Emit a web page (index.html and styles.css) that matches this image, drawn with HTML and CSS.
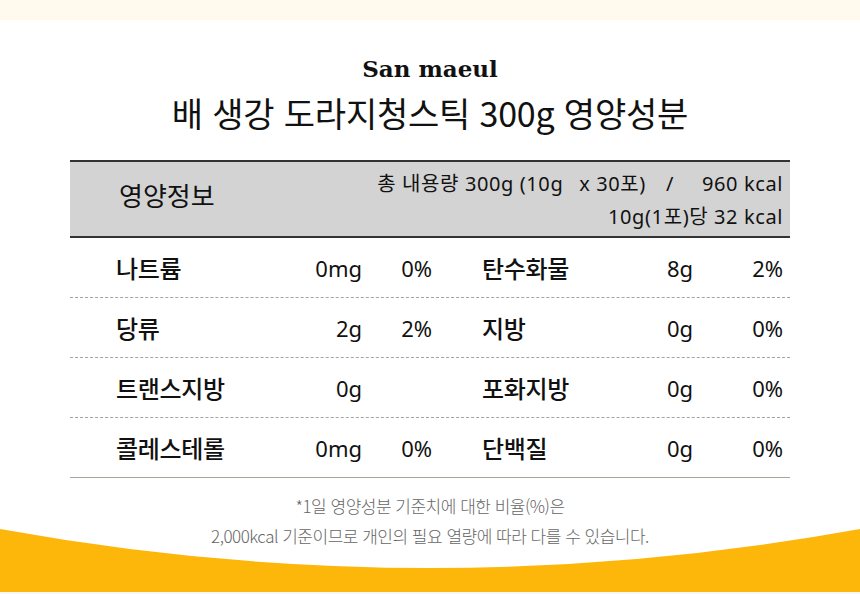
FILE: index.html
```html
<!DOCTYPE html>
<html lang="ko">
<head>
<meta charset="utf-8">
<link rel="stylesheet" href="styles.css">
</head>
<body>
<div class="page">
  <div class="topband"></div>
  <header class="titles">
    <div class="brand">San maeul</div>
    <h1 class="title">배 생강 도라지청스틱 300g 영양성분</h1>
  </header>
  <section class="table">
    <div class="thead">
      <div class="thead-label">영양정보</div>
      <div class="thead-info">
        <div class="info-line"><span>총 내용량 300g (10g</span><span class="gap-x">x 30포)</span><span class="gap-slash">/</span><span class="gap-kcal">960 kcal</span></div>
        <div class="info-line">10g(1포)당 32 kcal</div>
      </div>
    </div>
    <div class="row">
      <div class="cell"><span class="name">나트륨</span><span class="val">0mg</span><span class="pct">0%</span></div>
      <div class="cell right"><span class="name">탄수화물</span><span class="val">8g</span><span class="pct">2%</span></div>
    </div>
    <div class="row">
      <div class="cell"><span class="name">당류</span><span class="val">2g</span><span class="pct">2%</span></div>
      <div class="cell right"><span class="name">지방</span><span class="val">0g</span><span class="pct">0%</span></div>
    </div>
    <div class="row">
      <div class="cell"><span class="name">트랜스지방</span><span class="val">0g</span><span class="pct"></span></div>
      <div class="cell right"><span class="name">포화지방</span><span class="val">0g</span><span class="pct">0%</span></div>
    </div>
    <div class="row last">
      <div class="cell"><span class="name">콜레스테롤</span><span class="val">0mg</span><span class="pct">0%</span></div>
      <div class="cell right"><span class="name">단백질</span><span class="val">0g</span><span class="pct">0%</span></div>
    </div>
  </section>
  <footer class="note">
    <p>*1일 영양성분 기준치에 대한 비율(%)은</p>
    <p>2,000kcal 기준이므로 개인의 필요 열량에 따라 다를 수 있습니다.</p>
  </footer>
  <svg class="wave" width="860" height="65" viewBox="0 0 860 65" preserveAspectRatio="none" aria-hidden="true">
    <path d="M0,0 Q430,78 860,0 L860,63 L0,63 Z" fill="#fdb70a"/>
    <rect x="0" y="63" width="860" height="2" fill="#f7f7f7"/>
  </svg>
</div>
</body>
</html>
```
FILE: styles.css
```css
html, body {
  margin: 0;
  padding: 0;
  background: #ffffff;
}
.page {
  position: relative;
  width: 860px;
  height: 594px;
  overflow: hidden;
  font-family: "Noto Sans CJK KR", "Noto Sans", sans-serif;
  color: #111;
}
.topband {
  height: 20px;
  background: #fffaed;
}
.titles {
  display: flex;
  flex-direction: column;
  align-items: center;
  padding-top: 33px;
}
.brand {
  font-family: "DejaVu Serif", serif;
  font-weight: bold;
  font-size: 23px;
  line-height: 32px;
  color: #111;
}
.title {
  margin: 6px 0 0;
  font-weight: 400;
  font-size: 34px;
  line-height: 44px;
  letter-spacing: -0.2px;
  color: #111;
}
.table {
  position: relative;
  z-index: 1;
  margin: 25px 70px 0;
}
.thead {
  display: flex;
  justify-content: space-between;
  align-items: center;
  height: 74px;
  background: #d3d3d3;
  border-top: 2px solid #333;
  border-bottom: 2px solid #333;
}
.thead-label {
  padding-left: 49px;
  font-size: 26px;
  font-weight: 400;
  padding-bottom: 9px;
}
.thead-info {
  padding-right: 7px;
  text-align: right;
  font-family: "Noto Sans", "Noto Sans CJK KR", sans-serif;
  font-size: 20px;
  letter-spacing: 0.6px;
  line-height: 33px;
  padding-top: 1px;
}
.info-line {
  white-space: nowrap;
}
.gap-x {
  margin-left: 16px;
}
.gap-slash {
  margin-left: 20px;
}
.gap-kcal {
  margin-left: 28px;
}
.row {
  display: grid;
  grid-template-columns: 1fr 1fr;
  height: 59px;
  border-bottom: 1px dashed #aaa39a;
}
.row.last {
  border-bottom: 1px solid #aaa39a;
}
.cell {
  display: grid;
  grid-template-columns: 1fr 90px 70px;
  align-items: center;
  padding-left: 46px;
  margin-right: -2px;
}
.cell.right {
  grid-template-columns: 1fr 90px 90px;
  padding-left: 50px;
  padding-right: 7px;
  margin-right: 0;
  margin-left: 2px;
}
.name {
  font-size: 24px;
  font-weight: 500;
  letter-spacing: -0.3px;
}
.val, .pct {
  text-align: right;
  font-family: "Noto Sans", "Noto Sans CJK KR", sans-serif;
  font-size: 22px;
}
.note {
  position: relative;
  z-index: 1;
  margin-top: 13px;
  text-align: center;
  color: #666;
  font-size: 17px;
  font-weight: 300;
  letter-spacing: -0.5px;
}
.note p {
  margin: 0;
  line-height: 30px;
}
.wave {
  position: absolute;
  left: 0;
  bottom: 0;
  display: block;
}
```
